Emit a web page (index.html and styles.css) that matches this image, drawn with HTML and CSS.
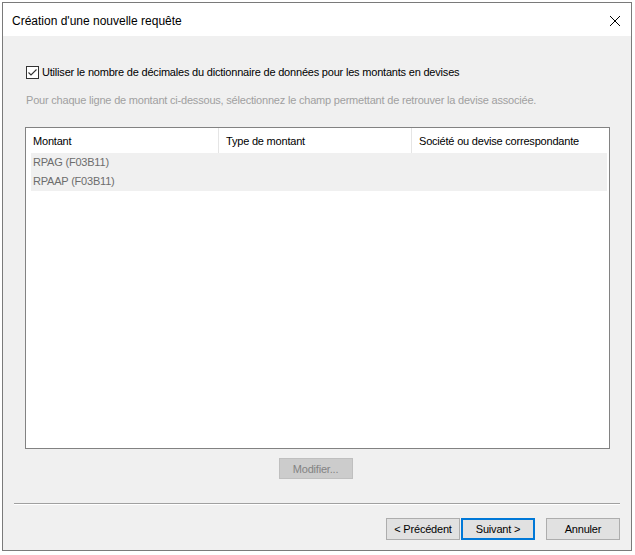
FILE: index.html
```html
<!DOCTYPE html>
<html lang="fr">
<head>
    <meta charset="UTF-8">
    <title>Création d'une nouvelle requête</title>
    <link rel="stylesheet" href="styles.css">
</head>
<body>
    <div class="window">
        <div class="titlebar">
            <span class="title">Création d'une nouvelle requête</span>
            <span class="close">
                <svg width="12" height="12" viewBox="0 0 12 12"><path d="M1 1 L11 11 M11 1 L1 11" stroke="#000" stroke-width="1" fill="none"/></svg>
            </span>
        </div>

        <div class="content">
            <label class="check-row">
                <span class="checkbox">
                    <svg width="11" height="11" viewBox="0 0 11 11"><path d="M1.5 5.5 L4 8 L9.5 2.5" stroke="#333" stroke-width="1.1" fill="none"/></svg>
                </span>
                Utiliser le nombre de décimales du dictionnaire de données pour les montants en devises
            </label>

            <p class="hint">Pour chaque ligne de montant ci-dessous, sélectionnez le champ permettant de retrouver la devise associée.</p>

            <div class="grid">
                <div class="grid-header">
                    <div class="col">Montant</div>
                    <div class="col">Type de montant</div>
                    <div class="col">Société ou devise correspondante</div>
                </div>
                <div class="grid-row">RPAG (F03B11)</div>
                <div class="grid-row">RPAAP (F03B11)</div>
            </div>

            <div class="modify">
                <button class="btn disabled">Modifier...</button>
            </div>
        </div>

        <div class="footer">
            <div class="separator"></div>
            <div class="buttons">
                <button class="btn">&lt; Précédent</button>
                <button class="btn default">Suivant &gt;</button>
                <button class="btn cancel">Annuler</button>
            </div>
        </div>
    </div>
</body>
</html>
```

FILE: styles.css
```css
* {
    box-sizing: border-box;
}

body {
    margin: 0;
    padding: 2px;
    background: #fff;
    font-family: 'Liberation Sans', Arial, sans-serif;
    font-size: 11px;
    letter-spacing: -0.2px;
}

.window {
    width: 630px;
    height: 549px;
    border: 1px solid #7a7a7a;
    background: #f0f0f0;
}

.titlebar {
    height: 33px;
    background: #fff;
    display: flex;
    align-items: center;
    justify-content: space-between;
    padding: 2px 10px 0 9px;
}

.title {
    font-size: 12px;
    letter-spacing: 0;
    color: #000;
}

.close {
    display: flex;
    width: 12px;
    height: 12px;
}

.content {
    padding: 0 21px 0 22px;
}

.check-row {
    display: flex;
    align-items: center;
    gap: 3px;
    height: 20px;
    margin-top: 26px;
    padding-left: 1px;
    color: #000;
}

.checkbox {
    width: 13px;
    height: 13px;
    border: 1px solid #333;
    background: #fff;
    display: flex;
    align-items: center;
    justify-content: center;
}

.hint {
    margin: 10px 0 0 1px;
    line-height: 16px;
    color: #a0a0a0;
}

.grid {
    margin-top: 19px;
    height: 322px;
    border: 1px solid #828282;
    background: #fff;
}

.grid-header {
    display: grid;
    grid-template-columns: 193px 193px 194px;
    height: 25px;
    width: 581px;
}

.grid-header .col {
    display: flex;
    align-items: center;
    padding-left: 7px;
    border-right: 1px solid #e5e5e5;
    color: #000;
}

.grid-header .col:last-child {
    border-right: none;
}

.grid-row {
    margin-left: 5px;
    width: 576px;
    height: 19px;
    line-height: 19px;
    padding-left: 2px;
    background: #f0f0f0;
    color: #6d6d6d;
}

.modify {
    display: flex;
    justify-content: center;
    margin-top: 9px;
    padding-right: 4px;
}

.btn {
    width: 74px;
    height: 22px;
    border: 1px solid #adadad;
    background: #e1e1e1;
    font-family: 'Liberation Sans', Arial, sans-serif;
    font-size: 11px;
    letter-spacing: -0.2px;
    color: #000;
    padding: 0;
}

.btn.disabled {
    height: 21px;
    background: #cccccc;
    border-color: #bfbfbf;
    color: #838383;
}

.btn.default {
    border: 2px solid #0078d7;
    margin-left: 1px;
}

.btn.cancel {
    margin-left: 11px;
}

.footer {
    padding: 0 11px 0 11px;
}

.separator {
    margin-top: 24px;
    border-top: 1px solid #a0a0a0;
    border-bottom: 1px solid #fff;
}

.buttons {
    display: flex;
    justify-content: flex-end;
    margin-top: 13px;
}
```
